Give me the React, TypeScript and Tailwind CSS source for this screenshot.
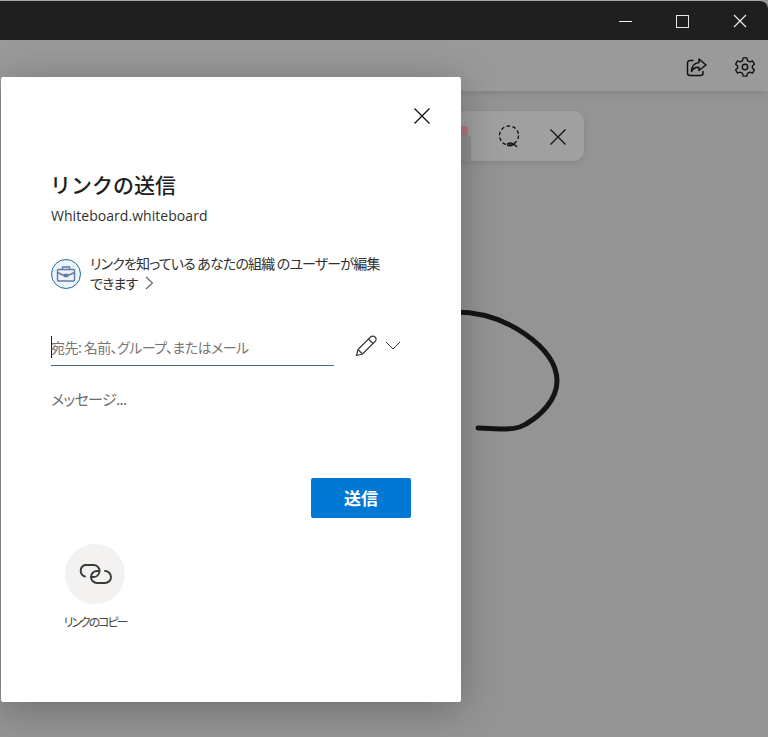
import React from "react";

const JP = { fontFamily: '"Noto Sans CJK JP", "Noto Sans", sans-serif', fontFeatureSettings: '"palt"' } as const;

function Chevron() {
  return (
    <svg width="16" height="14" viewBox="0 0 16 14" fill="none" stroke="#3b3a39" strokeWidth="1">
      <path d="M1 3 L8 10 L15 3" />
    </svg>
  );
}

export default function App() {
  return (
    <div className="relative h-[737px] w-[768px] overflow-hidden bg-[#949494]" style={JP}>
      <div className="flex h-[40px] items-center justify-end rounded-tr-[8px] border-t border-[#a8a8a8] bg-[#1f1f1f]">
        <div className="flex h-[39px] w-[57px] items-center justify-center pt-[1px]">
          <div className="h-px w-[13px] bg-[#f2f2f2]" />
        </div>
        <div className="flex h-[39px] w-[57px] items-center justify-center pt-[1px]">
          <div className="h-[13px] w-[13px] border border-[#e8e8e8]" />
        </div>
        <div className="flex h-[39px] w-[57px] items-center justify-center pt-[1px]">
          <svg width="14" height="14" viewBox="0 0 14 14" stroke="#f2f2f2" strokeWidth="1.1">
            <path d="M1 1 L13 13 M13 1 L1 13" />
          </svg>
        </div>
      </div>

      <div className="flex h-[51px] items-center justify-end gap-[26px] bg-[#9a9a9a] pr-[12px] pt-[2px] shadow-[0_2px_6px_rgba(0,0,0,0.12)]">
        <svg width="22" height="22" viewBox="0 0 22 22" fill="none" stroke="#111" strokeWidth="1.5" strokeLinejoin="round" strokeLinecap="round">
          <path d="M7 4.5 H4 A2.5 2.5 0 0 0 1.5 7 V17 A2.5 2.5 0 0 0 4 19.5 H14.5 A2.5 2.5 0 0 0 17 17 V15.5" />
          <path d="M13 3 L20 9 L13 14.5 V11.5 C10 11 7 12.5 5.5 15.5 C5.5 10.5 8.5 7 13 6.5 Z" />
        </svg>
        <svg width="22" height="22" viewBox="0 0 24 24" fill="none" stroke="#111" strokeWidth="1.5" strokeLinejoin="round">
          <circle cx="12" cy="12" r="3" />
          <path d="M10 2 H14 L14.7 5 L17.3 6.4 L20.2 5.4 L22.2 8.9 L20 11 V13 L22.2 15.1 L20.2 18.6 L17.3 17.6 L14.7 19 L14 22 H10 L9.3 19 L6.7 17.6 L3.8 18.6 L1.8 15.1 L4 13 V11 L1.8 8.9 L3.8 5.4 L6.7 6.4 L9.3 5 Z" />
        </svg>
      </div>

      {/* floating ink toolbar on the canvas */}
      <div className="absolute left-[300px] top-[111px] flex h-[50px] w-[284px] items-center justify-end gap-[28px] rounded-[10px] bg-[#a0a0a0] pr-[18px] pt-[2px] shadow-[0_2px_6px_rgba(0,0,0,0.1)]">
        <svg width="24" height="24" viewBox="0 0 24 24" fill="none" stroke="#111" strokeWidth="1.3">
          <circle cx="11" cy="10.5" r="9.5" strokeDasharray="3.6 2.4" />
          <path d="M9 19.5 C11 17 14 18 17 20 M9 19.5 C11 22 14 21 17 18.5 M17 20 L19 22" />
        </svg>
        <svg width="16" height="16" viewBox="0 0 16 16" stroke="#111" strokeWidth="1.3">
          <path d="M0.5 0.5 L15.5 15.5 M15.5 0.5 L0.5 15.5" />
        </svg>
      </div>
      <div className="absolute left-[458px] top-[126px] h-[10px] w-[10px] rounded-t-[3px] bg-[#b5767f]" />
      <div className="absolute left-[458px] top-[135px] h-[26px] w-[13px] rounded-t-[3px] bg-[#8f8f8f]" />

      {/* ink stroke */}
      <svg className="absolute left-0 top-0" width="768" height="737" fill="none" stroke="#141414" strokeWidth="5" strokeLinecap="round">
        <path d="M455 312 C480 312 505 320 525 334 C545 348 557 364 557 381 C557 400 540 416 526 424 C518 429 510 429 500 429 L478 428" />
      </svg>

      {/* dialog */}
      <div className="absolute left-[1px] top-[77px] flex h-[625px] w-[460px] flex-col rounded-[2px] bg-white pl-[50px] pr-[50px] shadow-[0_6px_40px_rgba(0,0,0,0.28)]">
        <button className="absolute right-[31px] top-[31px]">
          <svg width="16" height="16" viewBox="0 0 16 16" stroke="#111" strokeWidth="1.3" className="block">
            <path d="M0.5 0.5 L15.5 15.5 M15.5 0.5 L0.5 15.5" />
          </svg>
        </button>

        <h1 className="mt-[91px] -ml-[1px] h-[32px] text-[21px] font-medium leading-[32px] text-[#201f1e]" style={{ fontFeatureSettings: "normal" }}>リンクの送信</h1>
        <p className="mt-[6px] h-[20px] text-[14px] leading-[20px] tracking-[0.05px] text-[#323130]" style={{ fontFamily: '"Open Sans", sans-serif' }}>Whiteboard.whiteboard</p>

        <div className="mt-[27px] flex items-start">
          <div className="mt-[6px] flex h-[30px] w-[30px] shrink-0 items-center justify-center rounded-full border-[1.5px] border-[#1f6aa5] bg-[#eef3f8]">
            <svg width="20" height="18" viewBox="0 0 20 18" fill="none" stroke="#5f7ba3" strokeWidth="1.4">
              <rect x="1.5" y="4.5" width="17" height="11.5" rx="1" />
              <path d="M6.5 4.5 V2 H13.5 V4.5" />
              <path d="M1.5 7.5 L8 10.5 M18.5 7.5 L12 10.5" />
              <rect x="8.5" y="9.5" width="3" height="2" fill="#5f7ba3" />
            </svg>
          </div>
          <div className="ml-[9px] w-[300px] text-[14px] leading-[20px] text-[#323130] tracking-[-0.06em]">
            <div className="h-[20px] whitespace-nowrap">リンクを知っている あなたの組織 のユーザーが編集</div>
            <div className="flex h-[20px] items-center">
              できます
              <svg width="9" height="14" viewBox="0 0 9 14" fill="none" stroke="#6b5a6b" strokeWidth="1.1" className="ml-[8px]">
                <path d="M1 1 L7.5 7 L1 13" />
              </svg>
            </div>
          </div>
        </div>

        <div className="mt-[36px] flex items-start">
          <div className="flex h-[37px] w-[283px] items-center border-b border-[#4a6a85]">
            <div className="mr-[-1px] h-[22px] w-px bg-[#201f1e]" />
            <span className="text-[14px] leading-[20px] text-[#767676] whitespace-nowrap tracking-[-0.04em]">宛先: 名前、グループ、またはメール</span>
          </div>
          <div className="ml-[21px] flex items-center gap-[8px] pt-[6px]">
            <svg width="22" height="22" viewBox="0 0 22 22" fill="none" stroke="#3b3a39" strokeWidth="1.2" strokeLinejoin="round">
              <path d="M1.5 20.5 L3 14.5 L15.5 2 A2.4 2.4 0 0 1 20 6.5 L7.5 19 Z" />
              <path d="M13.5 4 L18 8.5 M3 14.5 L7.5 19" />
            </svg>
            <Chevron />
          </div>
        </div>

        <p className="mt-[22px] h-[22px] text-[15px] leading-[22px] text-[#6d6d6d] tracking-[-0.045em]">メッセージ...</p>

        <div className="mt-[68px] flex justify-end">
          <button className="h-[40px] w-[100px] rounded-[2px] bg-[#0078d4] text-[17px] font-bold text-white">送信</button>
        </div>

        <div className="mt-[26px] flex w-[90px] flex-col items-center -ml-[1px]">
          <div className="flex h-[60px] w-[60px] items-center justify-center rounded-full bg-[#f3f2f1]">
            <svg width="34" height="24" viewBox="0 0 34 24" fill="none" stroke="#3b3a39" strokeWidth="1.9" strokeLinecap="round">
              <path d="M7 14.5 A6 6 0 0 1 7 3 H15 A6 6 0 0 1 21.5 9.5 A6 6 0 0 1 15 15 H13" />
              <path d="M27 9 A6 6 0 0 1 27 21 H19 A6 6 0 0 1 13 15 A6 6 0 0 1 19 9 H21" />
            </svg>
          </div>
          <span className="mt-[9px] whitespace-nowrap text-[12px] leading-[18px] text-[#484644] tracking-[-0.17em]">リンクのコピー</span>
        </div>
      </div>
    </div>
  );
}
